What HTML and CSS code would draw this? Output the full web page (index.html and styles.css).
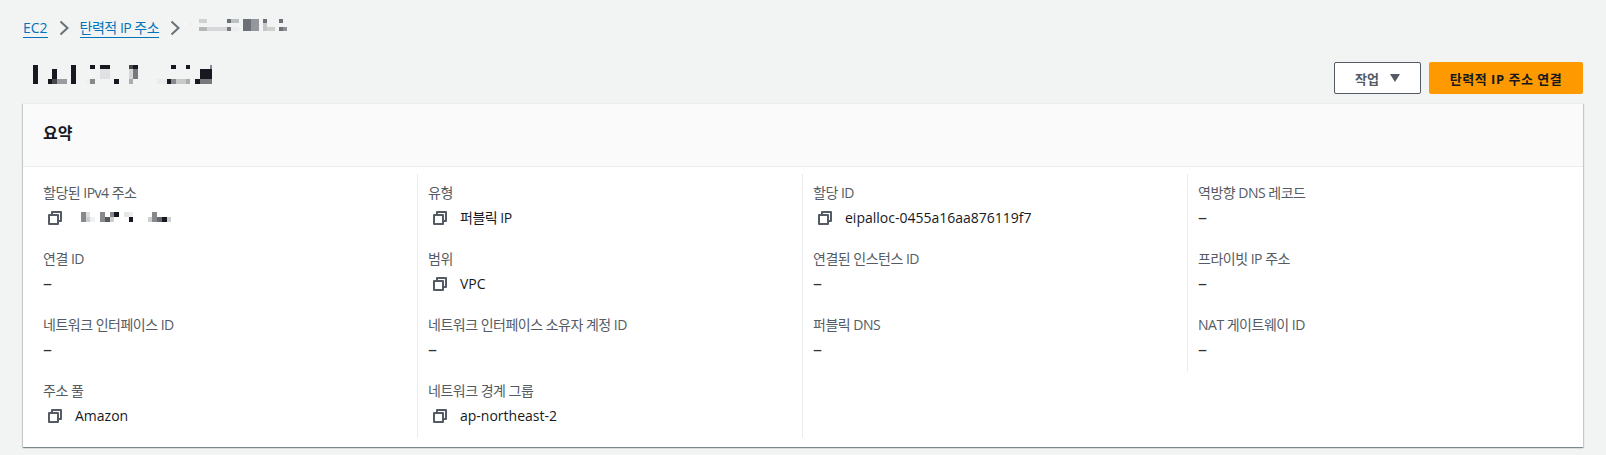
FILE: index.html
```html
<!DOCTYPE html>
<html lang="ko">
<head>
    <meta charset="UTF-8">
    <meta name="viewport" content="width=device-width, initial-scale=1.0">
    <title>탄력적 IP 주소</title>
    <link rel="stylesheet" href="styles.css">
</head>
<body>
    <!-- shared copy icon -->
    <svg class="sprite" aria-hidden="true">
        <symbol id="copy" viewBox="0 0 16 16">
            <path d="M2 5h9v9H2z M5 5V2h9v9h-3" fill="none" stroke="#545b64" stroke-width="2" stroke-linejoin="round"/>
        </symbol>
    </svg>

    <nav class="breadcrumb">
        <a href="#">EC2</a>
        <svg class="chevron" viewBox="0 0 10 16"><path d="M1.5 1.5 8.5 8l-7 6.5" fill="none" stroke="#687078" stroke-width="2"/></svg>
        <a href="#" class="ko">탄력적 IP 주소</a>
        <svg class="chevron" viewBox="0 0 10 16"><path d="M1.5 1.5 8.5 8l-7 6.5" fill="none" stroke="#687078" stroke-width="2"/></svg>
        <svg class="mosaic-crumb" viewBox="0 0 110 30" shape-rendering="crispEdges">
            <rect x="2" y="11" width="1" height="2" fill="#e4e6e6"/>
            <rect x="10" y="7" width="8" height="4" fill="#cfd0d1"/>
            <rect x="10" y="15" width="8" height="4" fill="#b4b6b8"/>
            <rect x="18" y="15" width="20" height="4" fill="#d6d7d8"/>
            <rect x="38" y="7" width="4" height="4" fill="#687078"/>
            <rect x="42" y="7" width="8" height="4" fill="#bcbec0"/>
            <rect x="38" y="15" width="4" height="4" fill="#777c82"/>
            <rect x="42" y="15" width="8" height="4" fill="#eceded"/>
            <rect x="54" y="7" width="8" height="12" fill="#6c7177"/>
            <rect x="62" y="7" width="8" height="12" fill="#94979b"/>
            <rect x="74" y="7" width="4" height="4" fill="#6c7177"/>
            <rect x="74" y="11" width="4" height="4" fill="#c4c6c8"/>
            <rect x="74" y="15" width="4" height="4" fill="#c4c6c8"/>
            <rect x="78" y="15" width="8" height="4" fill="#cdcfd0"/>
            <rect x="90" y="7" width="4" height="4" fill="#6c7177"/>
            <rect x="90" y="15" width="4" height="4" fill="#6c7177"/>
            <rect x="94" y="15" width="4" height="4" fill="#8d9095"/>
        </svg>
    </nav>

    <header class="page-header">
        <svg class="mosaic-title" viewBox="0 0 190 32" shape-rendering="crispEdges">
            <rect x="5" y="7" width="5" height="19" fill="#16191f"/>
            <rect x="24" y="11" width="5" height="10" fill="#16191f"/>
            <rect x="20" y="21" width="4" height="5" fill="#16191f"/>
            <rect x="24" y="21" width="5" height="5" fill="#44474c"/>
            <rect x="29" y="21" width="10" height="5" fill="#999b9e"/>
            <rect x="43" y="7" width="5" height="19" fill="#16191f"/>
            <rect x="62" y="7" width="5" height="4" fill="#16191f"/>
            <rect x="72" y="7" width="10" height="4" fill="#16191f"/>
            <rect x="72" y="11" width="10" height="10" fill="#e0e1e2"/>
            <rect x="58" y="21" width="4" height="5" fill="#eeefef"/>
            <rect x="62" y="21" width="5" height="5" fill="#88898d"/>
            <rect x="86" y="21" width="5" height="5" fill="#16191f"/>
            <rect x="101" y="7" width="4" height="4" fill="#44474c"/>
            <rect x="105" y="7" width="5" height="4" fill="#16191f"/>
            <rect x="101" y="11" width="4" height="10" fill="#d5d6d7"/>
            <rect x="105" y="11" width="5" height="10" fill="#77797d"/>
            <rect x="101" y="21" width="4" height="5" fill="#aaacae"/>
            <rect x="143" y="7" width="5" height="4" fill="#16191f"/>
            <rect x="158" y="7" width="4" height="4" fill="#16191f"/>
            <rect x="129" y="21" width="10" height="5" fill="#eaebeb"/>
            <rect x="139" y="21" width="4" height="5" fill="#16191f"/>
            <rect x="143" y="21" width="5" height="5" fill="#88898d"/>
            <rect x="148" y="21" width="10" height="5" fill="#c8c9ca"/>
            <rect x="158" y="21" width="4" height="5" fill="#aaacae"/>
            <rect x="182" y="7" width="2" height="4" fill="#88898d"/>
            <rect x="172" y="11" width="12" height="10" fill="#16191f"/>
            <rect x="167" y="21" width="5" height="5" fill="#16191f"/>
            <rect x="172" y="21" width="12" height="5" fill="#77797d"/>
        </svg>
        <div class="actions">
            <button class="btn">작업 <span class="caret"></span></button>
            <button class="btn btn-primary">탄력적 IP 주소 연결</button>
        </div>
    </header>

    <section class="card">
        <h2 class="card-title">요약</h2>
        <div class="columns">
            <div class="column">
                <div class="item">
                    <div class="label">할당된 IPv4 주소</div>
                    <div class="value">
                        <svg class="copy"><use href="#copy"/></svg>
                        <svg class="mosaic-value" viewBox="0 0 100 14" shape-rendering="crispEdges">
                            <rect x="0" y="1" width="5" height="10" fill="#88898d"/>
                            <rect x="5" y="1" width="4" height="5" fill="#dddedf"/>
                            <rect x="5" y="6" width="4" height="5" fill="#ccced0"/>
                            <rect x="9" y="6" width="5" height="5" fill="#f0f1f1"/>
                            <rect x="19" y="1" width="5" height="10" fill="#88898d"/>
                            <rect x="24" y="6" width="5" height="5" fill="#55585c"/>
                            <rect x="29" y="1" width="4" height="5" fill="#88898d"/>
                            <rect x="29" y="6" width="4" height="5" fill="#ccced0"/>
                            <rect x="33" y="1" width="5" height="5" fill="#16191f"/>
                            <rect x="43" y="1" width="5" height="5" fill="#e5e6e6"/>
                            <rect x="48" y="1" width="4" height="5" fill="#eeefef"/>
                            <rect x="48" y="6" width="4" height="5" fill="#16191f"/>
                            <rect x="67" y="6" width="4" height="5" fill="#ccced0"/>
                            <rect x="71" y="1" width="5" height="10" fill="#88898d"/>
                            <rect x="76" y="6" width="5" height="5" fill="#66696d"/>
                            <rect x="81" y="6" width="5" height="5" fill="#16191f"/>
                            <rect x="86" y="6" width="4" height="5" fill="#ccced0"/>
                        </svg>
                    </div>
                </div>
                <div class="item">
                    <div class="label">연결 ID</div>
                    <div class="value dash">–</div>
                </div>
                <div class="item">
                    <div class="label">네트워크 인터페이스 ID</div>
                    <div class="value dash">–</div>
                </div>
                <div class="item">
                    <div class="label">주소 풀</div>
                    <div class="value"><svg class="copy"><use href="#copy"/></svg>Amazon</div>
                </div>
            </div>

            <div class="column">
                <div class="item">
                    <div class="label">유형</div>
                    <div class="value ko"><svg class="copy"><use href="#copy"/></svg>퍼블릭 IP</div>
                </div>
                <div class="item">
                    <div class="label">범위</div>
                    <div class="value"><svg class="copy"><use href="#copy"/></svg>VPC</div>
                </div>
                <div class="item">
                    <div class="label">네트워크 인터페이스 소유자 계정 ID</div>
                    <div class="value dash">–</div>
                </div>
                <div class="item">
                    <div class="label">네트워크 경계 그룹</div>
                    <div class="value"><svg class="copy"><use href="#copy"/></svg>ap-northeast-2</div>
                </div>
            </div>

            <div class="column column-full">
                <div class="item">
                    <div class="label">할당 ID</div>
                    <div class="value"><svg class="copy"><use href="#copy"/></svg>eipalloc-0455a16aa876119f7</div>
                </div>
                <div class="item">
                    <div class="label">연결된 인스턴스 ID</div>
                    <div class="value dash">–</div>
                </div>
                <div class="item">
                    <div class="label">퍼블릭 DNS</div>
                    <div class="value dash">–</div>
                </div>
            </div>

            <div class="column">
                <div class="item">
                    <div class="label">역방향 DNS 레코드</div>
                    <div class="value dash">–</div>
                </div>
                <div class="item">
                    <div class="label">프라이빗 IP 주소</div>
                    <div class="value dash">–</div>
                </div>
                <div class="item">
                    <div class="label">NAT 게이트웨이 ID</div>
                    <div class="value dash">–</div>
                </div>
            </div>
        </div>
    </section>
</body>
</html>
```

FILE: styles.css
```css
* {
    box-sizing: border-box;
}

html, body {
    margin: 0;
    padding: 0;
}

body {
    background: #f2f3f3;
    color: #16191f;
    font-family: "Open Sans", "Noto Sans CJK KR", sans-serif;
    font-size: 14px;
    padding: 0 23px;
    height: 455px;
    overflow: hidden;
}

.sprite {
    display: none;
}

.ko {
    letter-spacing: -0.5px;
}

/* BREADCRUMB */
.breadcrumb {
    display: flex;
    align-items: center;
    height: 56px;
    gap: 11px;
}

.breadcrumb a {
    color: #0073bb;
    text-decoration: none;
    border-bottom: 1px solid #0073bb;
    line-height: 19px;
}

.chevron {
    width: 10px;
    height: 16px;
}

.mosaic-crumb {
    width: 110px;
    height: 30px;
    margin: -2px 0 0 -2px;
}

/* PAGE HEADER */
.page-header {
    display: flex;
    justify-content: space-between;
    align-items: flex-start;
    height: 47px;
}

.mosaic-title {
    width: 190px;
    height: 32px;
    margin: 2px 0 0 5px;
}

.actions {
    display: flex;
    gap: 8px;
    margin-top: 6px;
}

.btn {
    height: 32px;
    width: 87px;
    background: white;
    color: #545b64;
    border: 1px solid #545b64;
    border-radius: 2px;
    font-family: inherit;
    font-size: 13px;
    font-weight: 700;
    padding: 0;
    display: flex;
    align-items: center;
    justify-content: center;
    gap: 11px;
}

.btn-primary {
    width: 154px;
    background: #ff9900;
    border-color: #ff9900;
    color: #16191f;
    letter-spacing: 0.5px;
}

.caret {
    width: 0;
    height: 0;
    border-left: 5px solid transparent;
    border-right: 5px solid transparent;
    border-top: 8px solid #545b64;
}

/* CARD */
.card {
    background: white;
    height: 344px;
    box-shadow: 0 1px 1px rgba(0, 28, 36, 0.3), 1px 1px 1px rgba(0, 28, 36, 0.15), -1px 1px 1px rgba(0, 28, 36, 0.15);
    border-top: 1px solid #eaeded;
}

.card-title {
    margin: 0;
    height: 63px;
    padding: 0 20px;
    background: #fafafa;
    border-bottom: 1px solid #eaeded;
    font-size: 16px;
    font-weight: 700;
    line-height: 58px;
}

.columns {
    display: grid;
    grid-template-columns: 394px 385px 385px 1fr;
    align-items: start;
    margin-top: 7px;
}

.column {
    padding-left: 10px;
    border-left: 1px solid #eaeded;
}

.column:first-child {
    padding-left: 20px;
    border-left: none;
}

.column-full {
    min-height: 264px;
}

.item {
    height: 66px;
    padding-top: 7px;
}

.label {
    color: #545b64;
    line-height: 24px;
    height: 24px;
    letter-spacing: -0.5px;
}

.value {
    display: flex;
    align-items: center;
    height: 25px;
    line-height: 25px;
}

.dash {
    color: #2f343a;
    font-size: 18px;
}

.copy {
    width: 16px;
    height: 16px;
    margin: 0 12px 0 4px;
    flex-shrink: 0;
}

.mosaic-value {
    width: 100px;
    height: 14px;
    margin-left: 6px;
}
```
